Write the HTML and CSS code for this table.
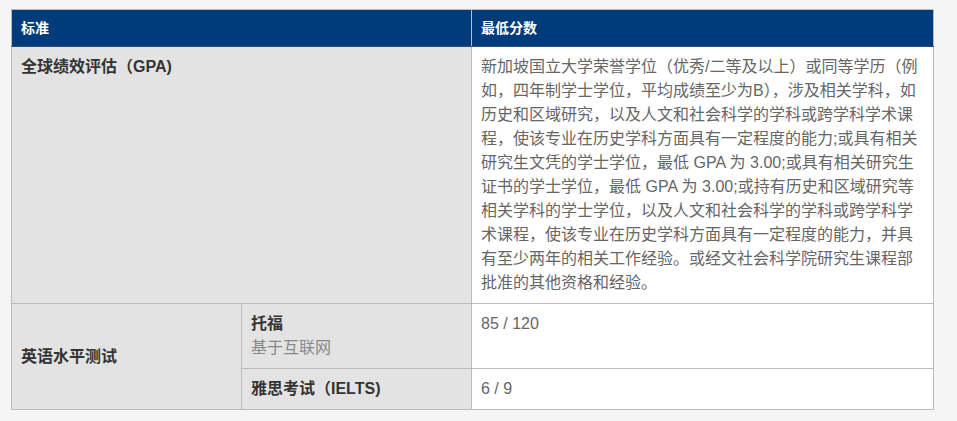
FILE: index.html
```html
<!DOCTYPE html>
<html lang="zh-CN">
<head>
<meta charset="utf-8">
<title>入学要求</title>
<link rel="stylesheet" href="styles.css">
</head>
<body>
<div class="wrap">
<table class="req">
  <colgroup>
    <col class="c1"><col class="c2"><col class="c3">
  </colgroup>
  <thead>
    <tr><th colspan="2">标准</th><th>最低分数</th></tr>
  </thead>
  <tbody>
    <tr>
      <td colspan="2" class="label top">全球绩效评估（GPA)</td>
      <td class="val">新加坡国立大学荣誉学位（优秀/二等及以上）或同等学历（例如，四年制学士学位，平均成绩至少为B），涉及相关学科，如历史和区域研究，以及人文和社会科学的学科或跨学科学术课程，使该专业在历史学科方面具有一定程度的能力;或具有相关研究生文凭的学士学位，最低 GPA 为 3.00;或具有相关研究生证书的学士学位，最低 GPA 为 3.00;或持有历史和区域研究等相关学科的学士学位，以及人文和社会科学的学科或跨学科学术课程，使该专业在历史学科方面具有一定程度的能力，并具有至少两年的相关工作经验。或经文社会科学院研究生课程部批准的其他资格和经验。</td>
    </tr>
    <tr>
      <td rowspan="2" class="label mid">英语水平测试</td>
      <td class="label top">托福<span class="sub">基于互联网</span></td>
      <td class="val">85 / 120</td>
    </tr>
    <tr>
      <td class="label top">雅思考试（IELTS)</td>
      <td class="val">6 / 9</td>
    </tr>
  </tbody>
</table>
</div>
</body>
</html>
```

FILE: styles.css
```css
html, body {
  margin: 0;
  padding: 0;
  background: #f5f5f5;
}
.wrap {
  padding: 9px 0 0 11px;
}
.req {
  border-collapse: collapse;
  width: 922px;
  table-layout: fixed;
  font-family: "Liberation Sans", "Noto Sans CJK SC", sans-serif;
  font-size: 16px;
  line-height: 24px;
  border: 1px solid #bbbbbb;
}
.c1 { width: 230px; }
.c2 { width: 230px; }
.c3 { width: 462px; }
.req th {
  background: #003c7b;
  color: #ffffff;
  font-size: 14px;
  font-weight: bold;
  text-align: left;
  line-height: 21px;
  padding: 8px 9px 7px;
  border: 1px solid #bbbbbb;
  border-bottom: 1px solid #2c4f80;
}
.req th + th {
  border-left: 1px solid #2c5384;
}
.req td {
  border: 1px solid #bbbbbb;
  padding: 8px 9px;
  vertical-align: top;
}
.label {
  background: #e3e3e3;
  color: #333333;
  font-weight: bold;
}
.label.mid {
  vertical-align: middle;
}
.sub {
  display: block;
  font-weight: normal;
  color: #888888;
}
.val {
  background: #ffffff;
  color: #666666;
}
```
